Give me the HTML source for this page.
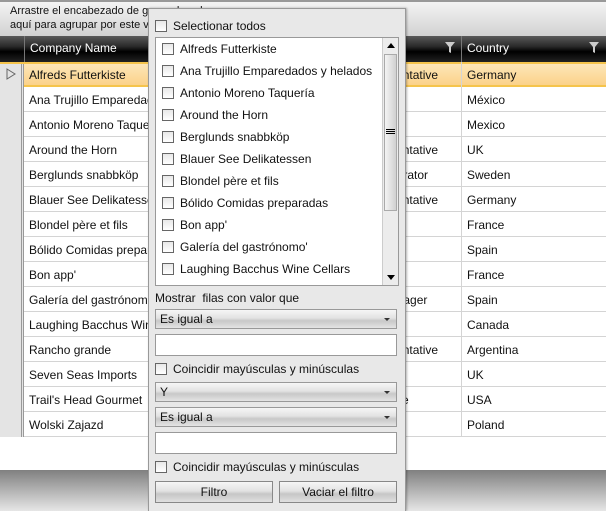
<!DOCTYPE html>
<html><head><meta charset="utf-8">
<style>
*{box-sizing:border-box;margin:0;padding:0}
body{width:606px;height:511px;overflow:hidden;position:relative;background:#fff;font-family:"Liberation Sans","DejaVu Sans",sans-serif;font-size:12px;color:#000}
.abs{position:absolute}
.top{left:0;top:0;width:606px;height:36px;background:linear-gradient(#f4f4f4,#d2d2d2);border-top:2px solid #999}
.top div{position:absolute;left:10px;font-size:11px;color:#111}
.hdr{left:0;top:36px;width:606px;height:26px;background:linear-gradient(#5a5a5a 0%,#2a2a2a 40%,#000 60%,#222 100%);}
.hdr .c{position:absolute;top:0;height:26px;border-left:1px solid #777;color:#fff;padding:5px 0 0 5px;font-size:12px}
.row{position:absolute;left:0;width:606px;height:25px;border-bottom:1px solid #d4d4d4}
.row .ind{position:absolute;left:0;top:0;width:24px;height:25px;background:#e4e4e4;border-right:3px double #999}
.row span{position:absolute;top:6px;font-size:12px;color:#111;white-space:nowrap}
.sel{background:linear-gradient(#fde6b8,#fbd28a);border-top:2px solid #f5c44c;border-bottom:2px solid #f5c44c}
.vl{position:absolute;top:62px;height:375px;width:1px;background:#d4d4d4}
.bot{left:0;top:470px;width:606px;height:41px;background:linear-gradient(#808080,#e6e6e6)}
.pop{left:148px;top:8px;width:258px;height:503px;background:#e8e8e8;border:1px solid #999;border-bottom:none;box-shadow:1px 0 2px rgba(0,0,0,.3)}
.cb{display:inline-block;width:12px;height:12px;border:1px solid #666;background:linear-gradient(#e8e8e8,#fff);vertical-align:middle}
.pop .t{position:absolute;font-size:12px;color:#111}
.list{left:6px;top:28px;width:244px;height:249px;background:#fff;border:1px solid #999;overflow:hidden}
.list .it{position:absolute;left:6px;font-size:12px;color:#111;white-space:nowrap}
.list .it .cb{margin-right:6px;margin-top:-2px}
.sb{position:absolute;right:0;top:0;width:16px;height:247px;background:#ececec;border-left:1px solid #ccc}
.dd{position:absolute;left:6px;width:242px;height:20px;border:1px solid #999;background:linear-gradient(#f6f6f6 0%,#e2e2e2 45%,#c8c8c8 60%,#e4e4e4 100%);font-size:12px;padding:2px 0 0 4px;color:#111}
.dd:after{content:"";position:absolute;right:6px;top:8px;border-left:3px solid transparent;border-right:3px solid transparent;border-top:3px solid #333}
.tb{position:absolute;left:6px;width:242px;height:22px;border:1px solid #999;background:#fff}
.btn{position:absolute;top:472px;height:22px;border:1px solid #888;background:linear-gradient(#f6f6f6 0%,#e2e2e2 45%,#c6c6c6 60%,#e0e0e0 100%);text-align:center;font-size:12px;padding-top:3px;color:#111}
.m{left:324px}
</style></head><body>
<div class="abs top"><div style="top:3px">Arrastre el encabezado de grupo de columna</div><div style="top:17px">aquí para agrupar por este valor</div></div>
<div class="abs hdr">
 <div class="c" style="left:0;width:24px;border-left:none"></div>
 <div class="c" style="left:24px;width:376px">Company Name</div>
 <div class="c" style="left:400px;width:61px"><svg class="abs" style="left:44px;top:6px" width="10" height="11"><path d="M0 0H10L6 5V11L4 10V5Z" fill="#ccc"/></svg></div>
 <div class="c" style="left:461px;width:145px">Country<svg class="abs" style="left:127px;top:6px" width="10" height="11"><path d="M0 0H10L6 5V11L4 10V5Z" fill="#ccc"/></svg></div>
</div>
<div class="row sel" style="top:62px"><div class="ind"><svg style="position:absolute;left:6px;top:4px" width="10" height="12"><path d="M1 1L9 6L1 11Z" fill="none" stroke="#666"/></svg></div><span style="left:29px;top:4px">Alfreds Futterkiste</span><span class="m" style="top:4px">Sales Representative</span><span style="left:467px;top:4px">Germany</span></div>
<div class="row" style="top:87px"><div class="ind"></div><span style="left:29px">Ana Trujillo Emparedados</span><span style="left:467px">México</span></div>
<div class="row" style="top:112px"><div class="ind"></div><span style="left:29px">Antonio Moreno Taquería</span><span style="left:467px">Mexico</span></div>
<div class="row" style="top:137px"><div class="ind"></div><span style="left:29px">Around the Horn</span><span class="m">Sales Representative</span><span style="left:467px">UK</span></div>
<div class="row" style="top:162px"><div class="ind"></div><span style="left:29px">Berglunds snabbköp</span><span class="m">Order Administrator</span><span style="left:467px">Sweden</span></div>
<div class="row" style="top:187px"><div class="ind"></div><span style="left:29px">Blauer See Delikatessen</span><span class="m">Sales Representative</span><span style="left:467px">Germany</span></div>
<div class="row" style="top:212px"><div class="ind"></div><span style="left:29px">Blondel père et fils</span><span style="left:467px">France</span></div>
<div class="row" style="top:237px"><div class="ind"></div><span style="left:29px">Bólido Comidas preparadas</span><span style="left:467px">Spain</span></div>
<div class="row" style="top:262px"><div class="ind"></div><span style="left:29px">Bon app'</span><span style="left:467px">France</span></div>
<div class="row" style="top:287px"><div class="ind"></div><span style="left:29px">Galería del gastrónomo</span><span class="m">Marketing Manager</span><span style="left:467px">Spain</span></div>
<div class="row" style="top:312px"><div class="ind"></div><span style="left:29px">Laughing Bacchus Wine</span><span class="m">Sales Assistant</span><span style="left:467px">Canada</span></div>
<div class="row" style="top:337px"><div class="ind"></div><span style="left:29px">Rancho grande</span><span class="m">Sales Representative</span><span style="left:467px">Argentina</span></div>
<div class="row" style="top:362px"><div class="ind"></div><span style="left:29px">Seven Seas Imports</span><span style="left:467px">UK</span></div>
<div class="row" style="top:387px"><div class="ind"></div><span style="left:29px">Trail's Head Gourmet</span><span class="m">Sales Associate</span><span style="left:467px">USA</span></div>
<div class="row" style="top:412px"><div class="ind"></div><span style="left:29px">Wolski Zajazd</span><span style="left:467px">Poland</span></div>
<div class="vl" style="left:461px"></div>
<div class="abs bot"></div>

<div class="abs pop">
 <div class="t" style="left:6px;top:10px"><span class="cb" style="margin-right:6px;margin-top:-2px"></span>Selectionar todos</div>
 <div class="abs list">
  <div class="it" style="top:4px"><span class="cb"></span>Alfreds Futterkiste</div>
  <div class="it" style="top:26px"><span class="cb"></span>Ana Trujillo Emparedados y helados</div>
  <div class="it" style="top:48px"><span class="cb"></span>Antonio Moreno Taquería</div>
  <div class="it" style="top:70px"><span class="cb"></span>Around the Horn</div>
  <div class="it" style="top:92px"><span class="cb"></span>Berglunds snabbköp</div>
  <div class="it" style="top:114px"><span class="cb"></span>Blauer See Delikatessen</div>
  <div class="it" style="top:136px"><span class="cb"></span>Blondel père et fils</div>
  <div class="it" style="top:158px"><span class="cb"></span>Bólido Comidas preparadas</div>
  <div class="it" style="top:180px"><span class="cb"></span>Bon app'</div>
  <div class="it" style="top:202px"><span class="cb"></span>Galería del gastrónomo'</div>
  <div class="it" style="top:224px"><span class="cb"></span>Laughing Bacchus Wine Cellars</div>
  <div class="sb">
   <svg class="abs" style="left:4px;top:5px" width="8" height="5"><path d="M0 5L4 0L8 5Z" fill="#000"/></svg>
   <div class="abs" style="left:1px;top:16px;width:13px;height:157px;background:linear-gradient(90deg,#f4f4f4,#d0d0d0);border:1px solid #aaa"></div>
   <svg class="abs" style="left:3px;top:91px" width="9" height="6"><path d="M0 .5H9M0 2.5H9M0 4.5H9" stroke="#000"/></svg>
   <svg class="abs" style="left:4px;top:237px" width="8" height="5"><path d="M0 0L4 5L8 0Z" fill="#000"/></svg>
  </div>
 </div>
 <div class="t" style="left:6px;top:282px">Mostrar&nbsp; filas con valor que</div>
 <div class="dd" style="top:300px">Es igual a</div>
 <div class="tb" style="top:325px"></div>
 <div class="t" style="left:6px;top:353px"><span class="cb" style="margin-right:6px;margin-top:-2px"></span>Coincidir mayúsculas y minúsculas</div>
 <div class="dd" style="top:373px">Y</div>
 <div class="dd" style="top:398px">Es igual a</div>
 <div class="tb" style="top:423px"></div>
 <div class="t" style="left:6px;top:451px"><span class="cb" style="margin-right:6px;margin-top:-2px"></span>Coincidir mayúsculas y minúsculas</div>
 <div class="btn" style="left:6px;width:118px">Filtro</div>
 <div class="btn" style="left:130px;width:118px">Vaciar el filtro</div>
</div>
</body></html>
